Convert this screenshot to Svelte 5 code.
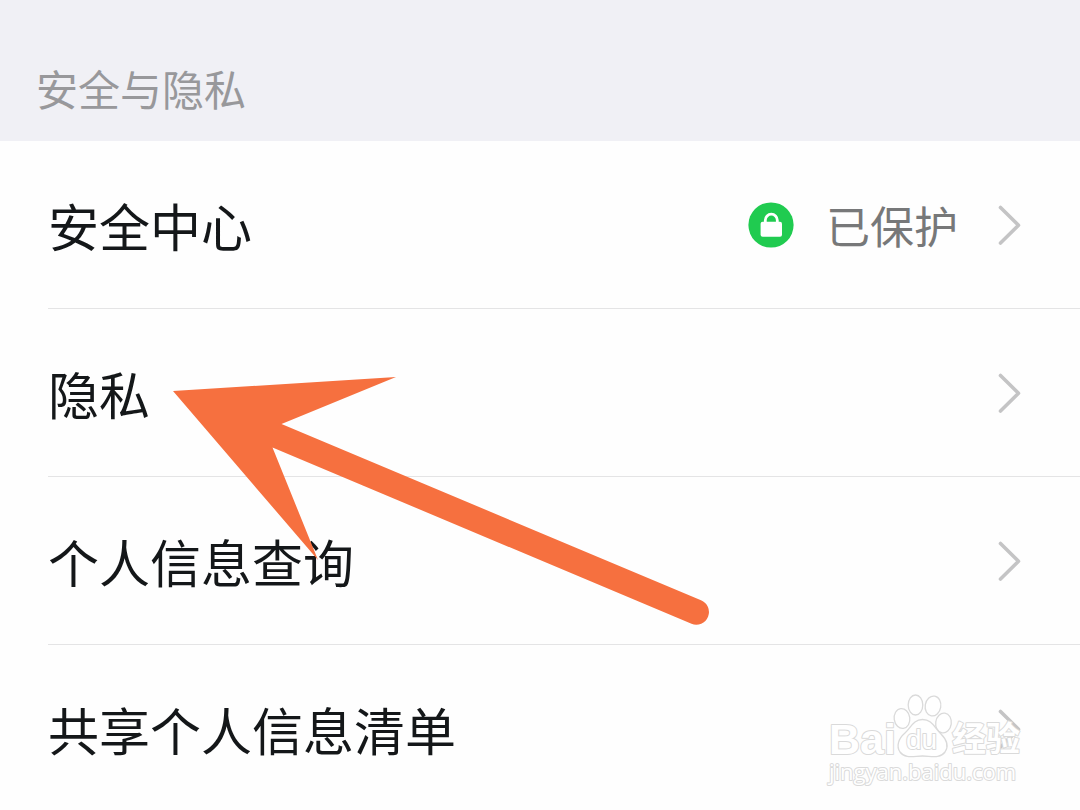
<script>
  const items = [
    { title: '安全中心', status: '已保护' },
    { title: '隐私' },
    { title: '个人信息查询' },
    { title: '共享个人信息清单' },
  ];
</script>

<main class="screen">
  <h2 class="section-title">安全与隐私</h2>
  <ul class="list">
    {#each items as item}
      <li class="item">
        <button class="row" type="button">
          <span class="title">{item.title}</span>
          {#if item.status}
            <svg class="lock" viewBox="0 0 46 46" aria-hidden="true">
              <circle cx="23" cy="23" r="22.6" fill="#20cb50" />
              <path d="M17.300 21v-2.700a6 6.200 0 0 1 12 0V21" fill="none" stroke="#fff" stroke-width="2.800" />
              <rect x="12.600" y="19.800" width="21.400" height="15" rx="2" fill="#fff" />
            </svg>
            <span class="status">{item.status}</span>
          {/if}
          <svg class="chevron" viewBox="0 0 24 40" aria-hidden="true">
            <path d="M2.500 2.500 20.500 20.300 2.500 38" fill="none" stroke="#c4c4c5" stroke-width="3.600" stroke-linecap="round" stroke-linejoin="round" />
          </svg>
        </button>
      </li>
    {/each}
  </ul>

  <svg class="arrow" viewBox="0 0 538 250" aria-hidden="true">
    <path d="M1 15 224 1 109.500 48 529 224.200A12.700 12.700 0 0 1 519.500 247.800L100.500 71.500 146 184Z" fill="#f6703f" />
  </svg>

  <svg class="watermark" viewBox="0 0 210 106" role="img" aria-label="Baidu 经验 jingyan.baidu.com">
    <g fill="#fff" stroke="#dadada" stroke-width="1.300" stroke-linejoin="round">
      <ellipse cx="82" cy="28.500" rx="7.800" ry="10" transform="rotate(-8 82 28.500)" />
      <ellipse cx="95.500" cy="15" rx="7.300" ry="10" />
      <ellipse cx="113" cy="16" rx="7.800" ry="10" transform="rotate(10 113 16)" />
      <ellipse cx="123.500" cy="33" rx="7.800" ry="10" transform="rotate(8 123.500 33)" />
      <path d="M102.500 29.500C93 29.500 91 38 85 43C78.500 48.500 76 56 80 62C85 69 94 66 102.500 66C111 66 120 69 125 62C129 56 127 50 121 44C114 37 112 29.500 102.500 29.500Z" />
      <text class="latin" x="9" y="64" font-size="43">Bai</text>
      <text class="du" x="86" y="59" font-size="28">du</text>
      <text class="cjk" x="132" y="61" font-size="34">经验</text>
      <text class="domain" x="9" y="90" font-size="22">jingyan.baidu.com</text>
    </g>
  </svg>
</main>

<style>
  :global(body) {
    margin: 0;
    overflow: hidden;
    background: #fefefe;
  }

  .screen {
    position: relative;
    min-height: 100vh;
    font-family: "Noto Sans CJK SC", "Noto Sans", sans-serif;
  }

  .section-title {
    box-sizing: border-box;
    margin: 0;
    padding: 58px 36px 23px;
    background: #f0f0f5;
    color: #98989b;
    font-size: 42px;
    font-weight: 400;
    line-height: 60px;
  }

  .list {
    margin: 0;
    padding: 0 0 0 48px;
    list-style: none;
  }

  .item + .item {
    border-top: 1px solid #e4e4e5;
  }

  .row {
    display: flex;
    align-items: center;
    box-sizing: border-box;
    width: 100%;
    min-height: 167px;
    padding: 0 58px 0 0;
    border: 0;
    background: transparent;
    color: #141719;
    font-family: inherit;
    text-align: left;
  }

  .title {
    flex: 1;
    font-size: 51px;
    font-weight: 400;
    line-height: 72px;
  }

  .lock {
    flex: none;
    width: 46px;
    height: 46px;
  }

  .status {
    margin: 0 40px 0 32px;
    color: #777879;
    font-size: 44px;
    line-height: 64px;
  }

  .chevron {
    flex: none;
    width: 24px;
    height: 40px;
  }

  .arrow {
    position: absolute;
    top: 376px;
    left: 172px;
    width: 538px;
    height: 250px;
    pointer-events: none;
  }

  .watermark {
    position: absolute;
    top: 690px;
    right: 50px;
    width: 210px;
    height: 106px;
    pointer-events: none;
  }

  .watermark text {
    paint-order: stroke;
    stroke-width: 2px;
  }

  .latin {
    font-family: "Liberation Sans", sans-serif;
    font-weight: 700;
  }

  .du {
    font-family: "Liberation Sans", sans-serif;
    font-weight: 400;
  }

  .cjk {
    font-family: "Noto Sans CJK SC", sans-serif;
    font-weight: 700;
  }

  .domain {
    font-family: "Open Sans", "Noto Sans", sans-serif;
    font-weight: 500;
  }
</style>
